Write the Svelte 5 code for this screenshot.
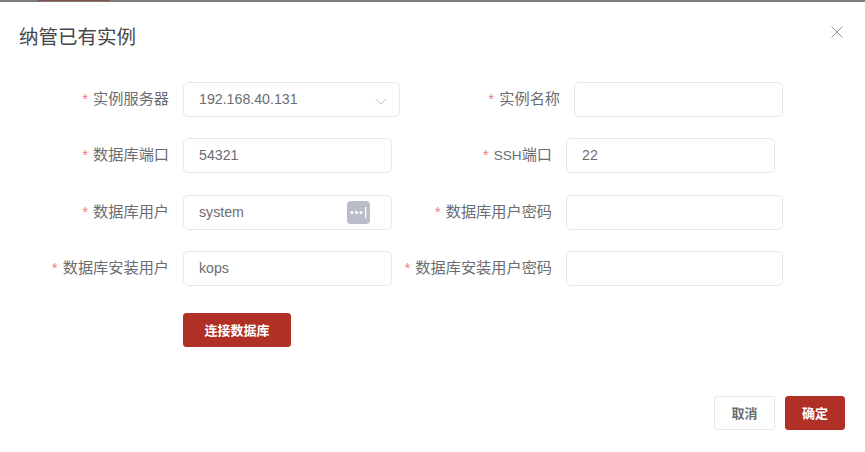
<script>
  const rows = [
    {
      left: { label: '实例服务器', value: '192.168.40.131', select: true },
      right: { label: '实例名称', value: '', cls: 'r1' }
    },
    {
      left: { label: '数据库端口', value: '54321' },
      right: { prefix: 'SSH', label: '端口', value: '22', cls: 'r2' }
    },
    {
      left: { label: '数据库用户', value: 'system', key: true },
      right: { label: '数据库用户密码', value: '', cls: 'r3' }
    },
    {
      left: { label: '数据库安装用户', value: 'kops' },
      right: { label: '数据库安装用户密码', value: '', cls: 'r3' }
    }
  ];
</script>

<div class="page">
  <div class="strip"><span class="bleed"></span></div>
  <header class="head">
    <h2>纳管已有实例</h2>
    <button class="close" aria-label="关闭">
      <svg width="12" height="12" viewBox="0 0 12 12"><path d="M.5.5l11 11M11.500.5l-11 11" stroke="#8f9299" stroke-width="1" fill="none"/></svg>
    </button>
  </header>

  <form class="form">
    {#each rows as row}
      <div class="row">
        <div class="field left">
          <span class="label"><i>*</i>{row.left.label}</span>
          <div class="box" class:select={row.left.select}>
            <input value={row.left.value} />
            {#if row.left.select}
              <svg class="chev" width="12" height="7" viewBox="0 0 12 7"><path d="M.5.800L6 6l5.500-5.200" stroke="#c0c4cc" fill="none"/></svg>
            {/if}
            {#if row.left.key}
              <svg class="key" width="23" height="23" viewBox="0 0 23 23">
                <rect width="23" height="23" rx="4" fill="#b9bdca"/>
                <circle cx="5" cy="11.500" r="1.500" fill="#fff"/>
                <circle cx="9.500" cy="11.500" r="1.500" fill="#fff"/>
                <circle cx="14" cy="11.500" r="1.500" fill="#fff"/>
                <rect x="18" y="6" width="1.300" height="11" fill="#fff"/>
              </svg>
            {/if}
          </div>
        </div>
        <div class="field right {row.right.cls}">
          <span class="label"><i>*</i>{#if row.right.prefix}<span class="latin">{row.right.prefix}</span>{/if}{row.right.label}</span>
          <div class="box"><input value={row.right.value} /></div>
        </div>
      </div>
    {/each}
    <div class="connect-row">
      <button type="button" class="btn primary connect">连接数据库</button>
    </div>
  </form>

  <footer class="foot">
    <button class="btn cancel">取消</button>
    <button class="btn primary ok">确定</button>
  </footer>
</div>

<style>
  :global(body) {
    margin: 0;
    background: #fff;
  }
  .page {
    width: 865px;
    height: 452px;
    overflow: hidden;
    background: #fff;
    font-family: "Liberation Sans", "Noto Sans CJK SC", sans-serif;
    color: #6b6d72;
    display: flex;
    flex-direction: column;
  }
  .strip {
    height: 2px;
    flex: none;
    background: #7d7d7d;
    padding-left: 38px;
  }
  .bleed {
    display: block;
    width: 72px;
    height: 1px;
    background: #84504a;
  }
  .head {
    height: 80px;
    flex: none;
    display: flex;
    justify-content: space-between;
    align-items: flex-start;
    padding: 0 22px 0 19px;
    box-sizing: border-box;
  }
  h2 {
    margin: 21px 0 0;
    font-size: 19.500px;
    line-height: 28px;
    font-weight: 400;
    color: #45474c;
  }
  .close {
    margin-top: 24px;
    padding: 0;
    border: 0;
    background: none;
    line-height: 0;
  }
  .form {
    display: flex;
    flex-direction: column;
    gap: 21.330px;
  }
  .row {
    display: flex;
    height: 35px;
  }
  .field {
    display: flex;
    align-items: center;
  }
  .label {
    flex: none;
    font-size: 15.200px;
    line-height: 20px;
    margin-top: -1px;
    color: #6b6d72;
    text-align: right;
    white-space: nowrap;
    box-sizing: border-box;
  }
  .latin {
    font-size: 13.600px;
  }
  .label i {
    font-style: normal;
    color: #ef7f7f;
    margin-right: 5px;
    font-family: "Liberation Sans", sans-serif;
  }
  .left {
    width: 392px;
    flex: none;
  }
  .left .label {
    width: 169px;
    margin-right: 14px;
  }
  .left .box {
    width: 209px;
  }
  .left .box.select {
    width: 217px;
  }
  .right {
    width: 391px;
    flex: none;
  }
  .right .label {
    width: 160px;
    margin-right: 14px;
  }
  .right .box {
    width: 217px;
  }
  .r1 .label {
    width: 168px;
  }
  .r1 .box {
    width: 209px;
  }
  .r2 .box {
    width: 209px;
  }
  .box {
    position: relative;
    height: 35px;
    flex: none;
  }
  input {
    display: block;
    width: 100%;
    height: 100%;
    box-sizing: border-box;
    border: 1px solid #e6e8ee;
    border-radius: 5px;
    padding: 0 15px 1px;
    font: inherit;
    font-size: 14.200px;
    color: #6b6d72;
    background: #fff;
    outline: none;
  }
  .chev {
    position: absolute;
    right: 13px;
    top: 16px;
  }
  .key {
    position: absolute;
    right: 22px;
    top: 6px;
  }
  .connect-row {
    padding-left: 183px;
    margin-top: 5.670px;
  }
  .btn {
    box-sizing: border-box;
    height: 34px;
    border-radius: 3px;
    font-family: inherit;
    font-size: 13px;
    font-weight: 700;
    padding: 0;
    cursor: pointer;
  }
  .primary {
    background: #b03026;
    border: 1px solid #b03026;
    color: #fff;
  }
  .connect {
    width: 108px;
  }
  .foot {
    display: flex;
    justify-content: flex-end;
    gap: 10px;
    padding-right: 20px;
    margin-top: 49px;
  }
  .cancel {
    width: 61px;
    background: #fff;
    border: 1px solid #e6e8ee;
    color: #6b6d72;
  }
  .ok {
    width: 60px;
  }
</style>
